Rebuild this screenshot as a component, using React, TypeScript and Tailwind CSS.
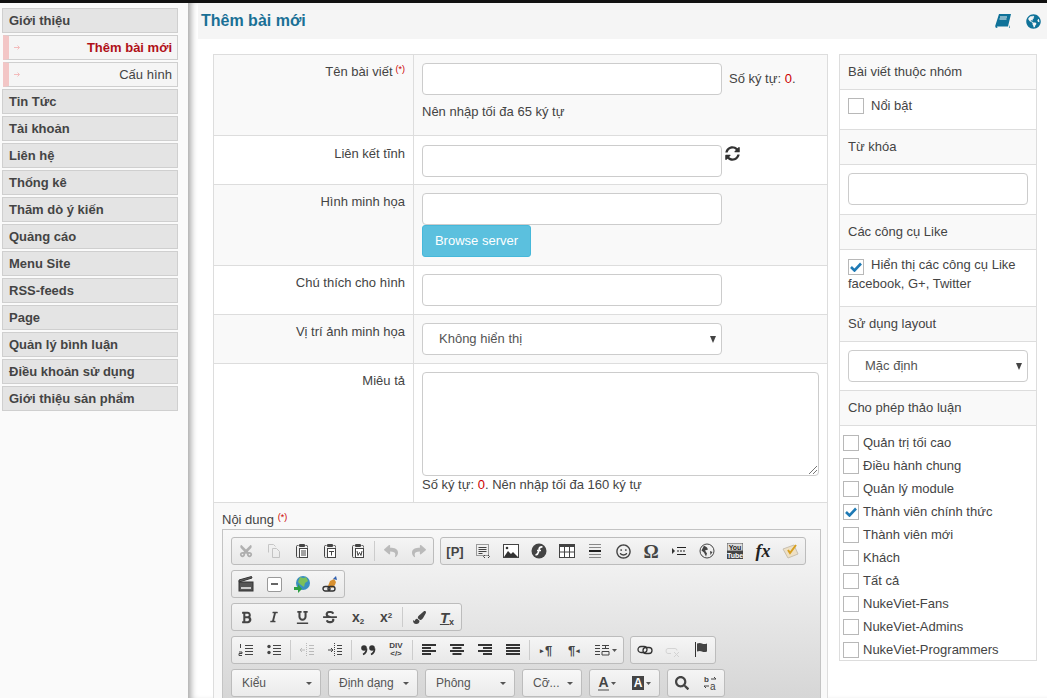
import React from "react";
import { FaGlobeAmericas, FaSyncAlt, FaCut, FaReply, FaShare, FaRegSmile, FaBold, FaItalic, FaUnderline, FaStrikethrough, FaPaintBrush, FaSearch } from "react-icons/fa";

const MENU_TOP = ["Tin Tức", "Tài khoản", "Liên hệ", "Thống kê", "Thăm dò ý kiến", "Quảng cáo", "Menu Site", "RSS-feeds", "Page", "Quản lý bình luận", "Điều khoản sử dụng", "Giới thiệu sản phẩm"];
const GROUPS: { label: string; checked?: boolean }[] = [
  { label: "Quản trị tối cao" },
  { label: "Điều hành chung" },
  { label: "Quản lý module" },
  { label: "Thành viên chính thức", checked: true },
  { label: "Thành viên mới" },
  { label: "Khách" },
  { label: "Tất cả" },
  { label: "NukeViet-Fans" },
  { label: "NukeViet-Admins" },
  { label: "NukeViet-Programmers" },
];

function MainItem({ label }: { label: string }) {
  return (
    <div className="h-[25px] mb-[2px] bg-[#e4e4e4] border border-[#cfcfcf] pl-[6px] leading-[23px] text-[13px] font-bold text-[#444]">
      {label}
    </div>
  );
}

function SubItem({ label, active }: { label: string; active?: boolean }) {
  return (
    <div className={`h-[25px] mb-[2px] ml-[1px] flex items-center justify-between bg-[#f5f5f5] border border-[#cfcfcf] border-l-[6px] border-l-[#f3c6c6] pr-[5px] pl-[5px] text-[13px] ${active ? "font-bold text-[#b01018]" : "text-[#444]"}`}>
      <svg width="6" height="5" viewBox="0 0 6 5" fill="none" stroke="#f3bcbc"><path d="M0 2.500h5.500M3.500 .5l2 2-2 2" /></svg>
      <span>{label}</span>
    </div>
  );
}

function TextInput({ className = "w-[300px]" }: { className?: string }) {
  return <div className={`h-[32px] bg-white border border-[#ccc] rounded-[4px] ${className}`} />;
}

function Select({ label, className }: { label: string; className: string }) {
  return (
    <div className={`h-[32px] bg-white border border-[#ccc] rounded-[4px] flex items-center justify-between pl-[16px] pr-[5px] text-[#555] ${className}`}>
      <span>{label}</span>
      <svg width="6" height="7" viewBox="0 0 6 7"><path d="M0 0h6L3 7z" fill="#444" /></svg>
    </div>
  );
}

function Checkbox({ checked }: { checked?: boolean }) {
  return (
    <span className="shrink-0 w-[16px] h-[16px] bg-white border border-[#b8b8b8] flex items-center justify-center">
      {checked && (
        <svg width="12" height="10" viewBox="0 0 12 10" fill="none" stroke="#1f7ab5" strokeWidth="2.600">
          <path d="M1 5l3.500 3.500L11 1.500" />
        </svg>
      )}
    </span>
  );
}

function Row({ label, h, gray, children, required, low }: { label: string; h: string; gray?: boolean; required?: boolean; low?: boolean; children: React.ReactNode }) {
  return (
    <div className={`flex border-b border-[#ddd] ${h} ${gray ? "bg-[#f9f9f9]" : "bg-white"}`}>
      <div className={`w-[200px] shrink-0 pr-[8px] text-right border-r border-[#ddd] ${low ? "pt-[8px]" : "pt-[7px]"}`}>
        {label}
        {required && <sup className="text-[#c00] text-[9px] ml-[3px]">(*)</sup>}
      </div>
      <div className={`flex-1 pl-[8px] ${low ? "pt-[9px]" : "pt-[8px]"}`}>{children}</div>
    </div>
  );
}

function SideHead({ label }: { label: string }) {
  return <div className="h-[35px] bg-[#f9f9f9] border-b border-[#ddd] px-[8px] leading-[34px] text-[#444]">{label}</div>;
}

// CKEditor style toolbar icons, drawn by hand since the packages have no close match
function Svg({ children, w = 16, h = 16 }: { children: React.ReactNode; w?: number; h?: number }) {
  return (
    <svg width={w} height={h} viewBox={`0 0 ${w} ${h}`} fill="none" stroke="#444">
      {children}
    </svg>
  );
}

function Clip({ mark }: { mark: "l" | "t" | "w" }) {
  return (
    <Svg>
      <path d="M4.500 2.500H3.500q-1 0-1 1v10q0 1 1 1h1M11.500 2.500h1q1 0 1 1v1" />
      <rect x="5" y="1" width="6" height="3" rx="1" fill="#444" stroke="none" />
      <rect x="5.500" y="5.500" width="8" height="9" fill="#fff" />
      {mark === "l" && <path d="M7 8h5M7 10h5M7 12h5" />}
      {mark === "t" && <path d="M7 8.500h5M9.500 8.500v4" />}
      {mark === "w" && <path d="M7 8l1 4.500 1.500-3 1.500 3 1-4.500" />}
    </Svg>
  );
}

function Copy() {
  return (
    <Svg>
      <path d="M2.500 9.500v-8h5l2 2M6.500 14.500v-9h4l3 3v6z" stroke="#666" />
    </Svg>
  );
}

function Align({ kind }: { kind: "l" | "c" | "r" | "j" }) {
  const rows = [14, 9, 14, 9];
  return (
    <Svg h={14}>
      {rows.map((len, i) => {
        const w = kind === "j" ? 14 : len;
        const x = kind === "l" || kind === "j" ? 1 : kind === "r" ? 15 - w : 8 - w / 2;
        return <rect key={i} x={x} y={1 + i * 3} width={w} height={2} fill="#333" stroke="none" />;
      })}
    </Svg>
  );
}

function ListIcon({ ordered }: { ordered?: boolean }) {
  return (
    <Svg>
      <path d="M7 4.500h8M7 7.500h8M7 10.500h8M7 13.500h8" strokeWidth="1" transform="translate(0 -1)" />
      {ordered ? (
        <path d="M2.500 2v4M1 10h3v1.500H1V13.500h3" strokeWidth="1" />
      ) : (
        <>
          <circle cx="3" cy="4.500" r="1.700" fill="#444" stroke="none" />
          <circle cx="3" cy="10.500" r="1.700" fill="#444" stroke="none" />
        </>
      )}
    </Svg>
  );
}

function IndentIcon({ out }: { out?: boolean }) {
  return (
    <Svg>
      <path d="M7.500 1v14" strokeDasharray="1 1" />
      <path d="M10 3.500h5M10 6.500h5M10 9.500h5M10 12.500h5" />
      {out ? <path d="M6 8H1M3 6L1 8l2 2" /> : <path d="M1 8h5M4 6l2 2-2 2" />}
    </Svg>
  );
}

function Quote() {
  return (
    <Svg>
      <circle cx="4" cy="6" r="2.800" fill="#333" stroke="none" />
      <path d="M6.500 6.500Q6.500 11 3 12.500" stroke="#333" strokeWidth="1.800" />
      <circle cx="12" cy="6" r="2.800" fill="#333" stroke="none" />
      <path d="M14.500 6.500Q14.500 11 11 12.500" stroke="#333" strokeWidth="1.800" />
    </Svg>
  );
}

function LinkIcon({ broken }: { broken?: boolean }) {
  return broken ? (
    <Svg>
      <path d="M6 11.500H3q-2 0-2-2.500t2-2.500h7q2 0 2 2" stroke="#999" />
      <path d="M9 10l5 5M14 10l-5 5" stroke="#999" />
    </Svg>
  ) : (
    <Svg h={12}>
      <rect x="1" y="2.500" width="9" height="6" rx="3" strokeWidth="1.300" stroke="#333" />
      <rect x="6" y="3.500" width="9" height="6" rx="3" strokeWidth="1.300" stroke="#333" />
    </Svg>
  );
}

function Clapper() {
  return (
    <Svg>
      <rect x="1" y="6" width="14" height="9" fill="#555" stroke="#333" />
      <path d="M1 6l13-4-.500-1.500L1 4z" fill="#666" stroke="#333" />
      <path d="M3 12h10" stroke="#ccc" strokeWidth="2" />
    </Svg>
  );
}

function WebGlobe() {
  return (
    <Svg w={18} h={18}>
      <circle cx="10" cy="8" r="7" fill="#3a8fc0" stroke="none" />
      <path d="M7 2q4 2 6 0l2 4-3 2-1 4-3-2-3-3z" fill="#7cc05a" stroke="none" />
      <path d="M1 12h4v-3l4 5-4 4v-3H1z" fill="#2ea043" stroke="none" />
    </Svg>
  );
}

function BrushLink() {
  return (
    <Svg w={17} h={17}>
      <path d="M6 10l2-5 4-2 2 3-1 3-3 3z" fill="#d89030" stroke="none" />
      <path d="M11 3l3-3 1 4z" fill="#3060b0" stroke="none" />
      <rect x="1" y="10.500" width="7" height="4.500" rx="2.200" stroke="#333" strokeWidth="1.400" />
      <rect x="6" y="10.500" width="7" height="4.500" rx="2.200" stroke="#333" strokeWidth="1.400" />
    </Svg>
  );
}

function YouTubeBox() {
  return (
    <svg width="16" height="16" viewBox="0 0 16 16">
      <rect x="0" y="0" width="16" height="8" fill="#ddd" stroke="#555" />
      <rect x="0" y="8" width="16" height="8" fill="#444" />
      <text x="8" y="6.500" fontSize="7" fontWeight="bold" textAnchor="middle" fill="#222">You</text>
      <text x="8" y="14.500" fontSize="7" fontWeight="bold" textAnchor="middle" fill="#fff">Tube</text>
    </svg>
  );
}

function Btn({ children, dim, w = "w-[28px]" }: { children: React.ReactNode; dim?: boolean; w?: string }) {
  return <span className={`${w} h-[26px] flex items-center justify-center text-[#444] text-[14px] ${dim ? "opacity-30" : ""}`}>{children}</span>;
}

function Caret() {
  return <svg width="5" height="3" viewBox="0 0 5 3" className="ml-[2px]"><path d="M0 0h5L2.500 3z" fill="#555" /></svg>;
}

function Sep() {
  return <span className="w-px h-[20px] mx-[2px] bg-[#ccc]" />;
}

function Group({ children }: { children: React.ReactNode }) {
  return <div className="h-[28px] flex items-center border border-[#bcbcbc] rounded-[3px] bg-gradient-to-b from-[#f5f5f5] to-[#e8e8e8]">{children}</div>;
}

function Combo({ label, w }: { label: string; w: string }) {
  return (
    <div className={`h-[28px] ${w} flex items-center justify-between pl-[10px] pr-[8px] border border-[#bcbcbc] rounded-[3px] bg-gradient-to-b from-[#f8f8f8] to-[#ebebeb] text-[12px] text-[#555]`}>
      <span>{label}</span>
      <svg width="6" height="3" viewBox="0 0 6 3"><path d="M0 0h6L3 3z" fill="#555" /></svg>
    </div>
  );
}

function Toolbar() {
  return (
    <div className="w-[599px] h-[170px] ml-[8px] border border-[#c4c4c4] bg-gradient-to-b from-[#f8f8f8] to-[#d6d6d6] pt-[7px] pl-[8px] flex flex-col gap-[5px]">
      <div className="flex gap-[6px]">
        <Group>
          <Btn dim><FaCut className="rotate-[-90deg] text-[#222]" /></Btn>
          <Btn dim><Copy /></Btn>
          <Btn><Clip mark="l" /></Btn>
          <Btn><Clip mark="t" /></Btn>
          <Btn><Clip mark="w" /></Btn>
          <Sep />
          <Btn dim><FaReply /></Btn>
          <Btn dim><FaShare /></Btn>
        </Group>
        <Group>
          <Btn><span className="font-bold text-[13px] leading-none">[P]</span></Btn>
          <Btn>
            <Svg>
              <rect x="1.500" y="1.500" width="12" height="11" strokeDasharray="1 1" />
              <path d="M3.500 4.500h8M3.500 6.500h8M3.500 8.500h8M3.500 10.500h4" />
              <path d="M10 12l-1.500 1.500L10 15M13 12l1.500 1.500L13 15" />
            </Svg>
          </Btn>
          <Btn>
            <Svg h={14}>
              <rect x=".5" y=".5" width="15" height="13" fill="#fff" />
              <path d="M1 13l4-6 3 3 2-2 5 5z" fill="#333" stroke="none" />
              <circle cx="4" cy="4" r="1.300" fill="#333" stroke="none" />
            </Svg>
          </Btn>
          <Btn>
            <Svg>
              <circle cx="8" cy="8" r="7.500" fill="#444" stroke="none" />
              <path d="M11.500 4Q8.500 3.500 8 6.500L7.500 9Q7 11.500 4.500 12M6 7.500h4" stroke="#fff" strokeWidth="1.600" />
            </Svg>
          </Btn>
          <Btn>
            <Svg h={14}>
              <rect x=".5" y=".5" width="15" height="13" fill="#fff" />
              <rect x="0" y="0" width="16" height="3" fill="#444" stroke="none" />
              <path d="M5.500 3v10M10.500 3v10M0 8h16" />
            </Svg>
          </Btn>
          <Btn>
            <Svg>
              <path d="M2 1.500h12M2 4.500h12" stroke="#888" />
              <path d="M2 8h12" strokeWidth="2" stroke="#222" />
              <path d="M2 11.500h12M2 14.500h12" stroke="#888" />
            </Svg>
          </Btn>
          <Btn><FaRegSmile className="text-[15px]" /></Btn>
          <Btn><span className="font-['Liberation_Serif'] font-bold text-[19px] leading-none">Ω</span></Btn>
          <Btn>
            <Svg>
              <path d="M1 5l3 3-3 3z" fill="#333" stroke="none" />
              <path d="M6 4.500h9M6 11.500h9" stroke="#222" />
              <path d="M6 8h9" stroke="#222" strokeDasharray="2 1" />
            </Svg>
          </Btn>
          <Btn>
            <Svg>
              <circle cx="8" cy="8" r="7" />
              <path d="M5 2.500l3 2 1 2-3 1 2 3-1 3-2-4-2.500-2zM11 8l2.500 1-2 3z" fill="#444" stroke="none" />
            </Svg>
          </Btn>
          <Btn><YouTubeBox /></Btn>
          <Btn><span className="font-['Liberation_Serif'] italic font-bold text-[18px] leading-none text-[#222]">fx</span></Btn>
          <Btn>
            <svg width="18" height="16" viewBox="0 0 18 16">
              <path d="M1 6l11-4 4 9-10 4z" fill="#eee0c4" stroke="#c8c0b0" />
              <path d="M6 7l2 3 6-8" fill="none" stroke="#d8a020" strokeWidth="2" />
            </svg>
          </Btn>
        </Group>
      </div>
      <div className="flex gap-[6px]">
        <Group>
          <Btn><Clapper /></Btn>
          <Btn>
            <span className="w-[15px] h-[15px] border border-[#999] rounded-[2px] bg-white flex items-center justify-center">
              <span className="w-[7px] h-[2px] bg-[#666]" />
            </span>
          </Btn>
          <Btn><WebGlobe /></Btn>
          <Btn><BrushLink /></Btn>
        </Group>
      </div>
      <div className="flex gap-[6px]">
        <Group>
          <Btn><FaBold className="text-[13px]" /></Btn>
          <Btn><FaItalic className="text-[12px]" /></Btn>
          <Btn><FaUnderline className="text-[13px]" /></Btn>
          <Btn><FaStrikethrough className="text-[14px]" /></Btn>
          <Btn><span className="font-bold text-[14px] leading-none">x<sub className="text-[8px]">2</sub></span></Btn>
          <Btn><span className="font-bold text-[14px] leading-none">x<sup className="text-[8px]">2</sup></span></Btn>
          <Sep />
          <Btn><FaPaintBrush className="text-[13px]" /></Btn>
          <Btn><span className="italic font-bold text-[15px] leading-none underline">T<sub className="not-italic text-[9px]">x</sub></span></Btn>
        </Group>
      </div>
      <div className="flex gap-[6px]">
        <Group>
          <Btn><ListIcon ordered /></Btn>
          <Btn><ListIcon /></Btn>
          <Sep />
          <Btn dim><IndentIcon out /></Btn>
          <Btn><IndentIcon /></Btn>
          <Sep />
          <Btn><Quote /></Btn>
          <Btn><span className="font-bold text-[8px] leading-[8px] text-center">DIV<br />&lt;/&gt;</span></Btn>
          <Sep />
          <Btn><Align kind="l" /></Btn>
          <Btn><Align kind="c" /></Btn>
          <Btn><Align kind="r" /></Btn>
          <Btn><Align kind="j" /></Btn>
          <Sep />
          <Btn><span className="flex items-center gap-[1px] font-bold text-[13px] leading-none"><span className="text-[7px]">▸</span>¶</span></Btn>
          <Btn><span className="flex items-center gap-[1px] font-bold text-[13px] leading-none">¶<span className="text-[7px]">◂</span></span></Btn>
          <Btn w="w-[35px]">
            <Svg>
              <path d="M1 3.500h5M1 6.500h5M1 9.500h5M1 12.500h5M8 3.500h7M11.500 3.500v3M8 6.500h7M8 9.500h7v3.500H8z" />
            </Svg>
            <Caret />
          </Btn>
        </Group>
        <Group>
          <Btn><LinkIcon /></Btn>
          <Btn dim><LinkIcon broken /></Btn>
          <Btn>
            <Svg>
              <path d="M2.500 0v15" stroke="#333" />
              <path d="M4 1.500q3-1 5 0t5 0v8q-3 1-5 0t-5 0z" fill="#444" stroke="none" />
            </Svg>
          </Btn>
        </Group>
      </div>
      <div className="flex gap-[7px]">
        <Combo label="Kiểu" w="w-[90px]" />
        <Combo label="Định dạng" w="w-[90px]" />
        <Combo label="Phông" w="w-[90px]" />
        <Combo label="Cỡ..." w="w-[60px]" />
        <Group>
          <Btn w="w-[34px]">
            <span className="font-bold text-[14px] leading-none border-b-2 border-[#999]">A</span>
            <Caret />
          </Btn>
          <Btn w="w-[35px]">
            <span className="bg-[#444] text-white font-bold text-[12px] leading-none px-[2px] py-[1px]">A</span>
            <Caret />
          </Btn>
        </Group>
        <Group>
          <Btn><FaSearch /></Btn>
          <Btn>
            <Svg>
              <text x="2" y="7" fontSize="8" fontWeight="bold" fill="#444" stroke="none">b</text>
              <text x="8" y="15" fontSize="10" fill="#444" stroke="none">a</text>
              <path d="M9 4h5l-2-2M7 11H2l2 2" />
            </Svg>
          </Btn>
        </Group>
      </div>
    </div>
  );
}

export default function App() {
  return (
    <div className="h-[698px] overflow-hidden bg-white font-['Liberation_Sans',Arial,sans-serif] text-[13px] text-[#444]">
      <div className="h-[3px] bg-[#111]" />
      <div className="flex h-[695px]">
        <aside className="w-[188px] shrink-0 pt-[5px] pl-[2px] pr-[10px] bg-[#fafafa]">
          <MainItem label="Giới thiệu" />
          <SubItem label="Thêm bài mới" active />
          <SubItem label="Cấu hình" />
          {MENU_TOP.map((m) => (
            <MainItem key={m} label={m} />
          ))}
        </aside>

        <main className="flex-1 pl-[10px] min-w-0 bg-white shadow-[inset_7px_0_6px_-4px_rgba(0,0,0,0.35)]">
          <div className="h-[36px] bg-[#f5f5f5] flex items-center justify-between pl-[3px] pr-[6px]">
            <h1 className="text-[16px] font-bold text-[#1a7096]">Thêm bài mới</h1>
            <div className="flex items-center gap-[15px] text-[#0f7299] text-[15px]">
              <svg width="16" height="14" viewBox="0 0 16 14" fill="#0f7299">
                <path d="M4 0h12l-3 12.500H2.500q-.8 0-.6.6t1 .9h11L15 11v2l-.5 1H2q-2 0-1.800-2z" />
                <path d="M5 3h7M4.500 5h7" stroke="#f5f5f5" strokeWidth="1" />
              </svg>
              <FaGlobeAmericas />
            </div>
          </div>

          <div className="flex pt-[15px] pl-[15px] gap-[11px]">
            <div className="w-[615px] shrink-0 border border-[#ddd] border-b-0">
              <Row label="Tên bài viết" required gray h="h-[81px]">
                <div className="flex items-center gap-[7px]">
                  <TextInput />
                  <span>Số ký tự: <b className="font-normal text-[#c00]">0</b>.</span>
                </div>
                <p className="mt-[7px]">Nên nhập tối đa 65 ký tự</p>
              </Row>
              <Row label="Liên kết tĩnh" low h="h-[49px]">
                <div className="flex items-start gap-[3px]">
                  <TextInput />
                  <FaSyncAlt className="text-[#333] text-[15px] mt-[1px]" />
                </div>
              </Row>
              <Row label="Hình minh họa" gray h="h-[81px]">
                <TextInput />
                <div className="w-[109px] h-[32px] bg-[#5bc0de] border border-[#46b8da] rounded-[3px] text-white text-center leading-[30px]">Browse server</div>
              </Row>
              <Row label="Chú thích cho hình" h="h-[49px]">
                <TextInput />
              </Row>
              <Row label="Vị trí ảnh minh họa" gray h="h-[49px]">
                <Select label="Không hiển thị" className="w-[300px]" />
              </Row>
              <Row label="Miêu tả" h="h-[139px]">
                <div className="relative w-[397px] h-[104px] bg-white border border-[#ccc] rounded-[4px]">
                  <svg width="8" height="8" viewBox="0 0 8 8" stroke="#777" className="absolute right-px bottom-px">
                    <path d="M0 8l8-8M4 8l4-4" />
                  </svg>
                </div>
                <p className="mt-[-1px]">Số ký tự: <span className="text-[#c00]">0</span>. Nên nhập tối đa 160 ký tự</p>
              </Row>
              <div className="bg-[#f9f9f9] h-[200px]">
                <div className="pl-[8px] pt-[7px] h-[26px]">Nội dung <sup className="text-[#c00] text-[9px]">(*)</sup></div>
                <Toolbar />
              </div>
            </div>

            <div className="w-[198px] shrink-0 h-[607px] border border-[#ddd]">
              <SideHead label="Bài viết thuộc nhóm" />
              <div className="h-[40px] border-b border-[#ddd] pl-[8px] pt-[8px] flex items-start gap-[7px]">
                <Checkbox />
                <span className="leading-[15px]">Nổi bật</span>
              </div>
              <SideHead label="Từ khóa" />
              <div className="h-[50px] border-b border-[#ddd] px-[8px] pt-[8px]">
                <TextInput className="w-full" />
              </div>
              <SideHead label="Các công cụ Like" />
              <div className="h-[57px] border-b border-[#ddd] px-[8px] pt-[6px] leading-[18px]">
                <span className="inline-block align-[-3px] mr-[7px]"><Checkbox checked /></span>
                Hiển thị các công cụ Like facebook, G+, Twitter
              </div>
              <SideHead label="Sử dụng layout" />
              <div className="h-[49px] border-b border-[#ddd] px-[8px] pt-[8px]">
                <Select label="Mặc định" className="w-full" />
              </div>
              <SideHead label="Cho phép thảo luận" />
              <div className="pl-[3px] pt-[9px] flex flex-col gap-[7px]">
                {GROUPS.map((g) => (
                  <div key={g.label} className="flex items-center gap-[4px] h-[16px]">
                    <Checkbox checked={g.checked} />
                    <span>{g.label}</span>
                  </div>
                ))}
              </div>
            </div>
          </div>
        </main>
      </div>
    </div>
  );
}
